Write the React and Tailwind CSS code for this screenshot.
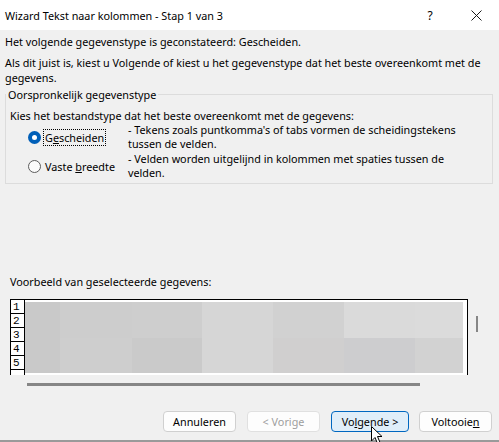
export default function App() {
  const widths = ['w-[35px]', 'w-[72px]', 'w-[70px]', 'w-[71px]', 'w-[71px]', 'w-[71px]', 'w-[48px]'];
  const topCls = ['bg-[#c9c9c9]', 'bg-[#cdcdcd]', 'bg-[#cecece]', 'bg-[#d6d6d6]', 'bg-[#d1d1d1]', 'bg-[#dadada]', 'bg-[#dbdbdb]'];
  const botCls = ['bg-[#c9c9c9]', 'bg-[#cecece]', 'bg-[#cacaca]', 'bg-[#d6d6d6]', 'bg-[#d0cfcf]', 'bg-[#cdcdcf]', 'bg-[#d2d2d2]'];

  return (
    <div className="relative w-[499px] h-[442px] overflow-hidden bg-[#f0f0f0] text-[10.8px] text-black font-['Noto_Sans',sans-serif] flex flex-col">
      {/* Title bar */}
      <div className="h-[30px] bg-white flex items-center pl-[5px] shrink-0">
        <span className="flex-1 leading-[15px]">Wizard Tekst naar kolommen - Stap 1 van 3</span>
        <span className="w-[46px] text-center text-[12px] leading-[15px]">?</span>
        <span className="w-[46px] flex justify-center items-center">
          <svg width="11" height="11" viewBox="0 0 11 11">
            <path d="M0.5 0.5 L10.5 10.5 M10.5 0.5 L0.5 10.5" stroke="#1a1a1a" strokeWidth="1" />
          </svg>
        </span>
      </div>

      <div className="px-[5px] flex flex-col">
        <p className="mt-[4px] leading-[15px] whitespace-nowrap">Het volgende gegevenstype is geconstateerd: Gescheiden.</p>
        <p className="mt-[6px] leading-[15px] whitespace-nowrap">
          Als dit juist is, kiest u Volgende of kiest u het gegevenstype dat het beste overeenkomt met de
          <br />
          gegevens.
        </p>

        {/* Group box */}
        <div className="relative mt-[9px] w-[488px] h-[90px] border border-[#dcdcdc] pt-[13px] pl-[4px]">
          <span className="absolute left-0 top-[-8px] px-[2px] bg-[#f0f0f0] leading-[15px]">Oorspronkelijk gegevenstype</span>
          <p className="leading-[15px] whitespace-nowrap">Kies het bestandstype dat het beste overeenkomt met de gegevens:</p>

          <div className="flex h-[28px]">
            <div className="w-[118px] shrink-0 flex items-center">
              <span className="ml-[18px] w-[13px] h-[13px] rounded-full bg-[#005fb8] flex items-center justify-center">
                <span className="w-[5px] h-[5px] rounded-full bg-white"></span>
              </span>
              <span className="ml-[2px] border border-dotted border-black px-[1px] h-[17px] leading-[15px]">
                G<span className="underline">e</span>scheiden
              </span>
            </div>
            <p className="leading-[14px] whitespace-nowrap">
              - Tekens zoals puntkomma's of tabs vormen de scheidingstekens
              <br />
              tussen de velden.
            </p>
          </div>

          <div className="flex h-[28px] mt-[1px]">
            <div className="w-[118px] shrink-0 flex items-center">
              <span className="ml-[18px] w-[13px] h-[13px] rounded-full bg-[#fbfbfb] border border-[#5c5c5c]"></span>
              <span className="ml-[2px] border border-transparent px-[1px] h-[17px] leading-[15px]">
                Vaste <span className="underline">b</span>reedte
              </span>
            </div>
            <p className="leading-[14px] whitespace-nowrap">
              - Velden worden uitgelijnd in kolommen met spaties tussen de
              <br />
              velden.
            </p>
          </div>
        </div>

        <p className="mt-[90px] ml-[5px] leading-[15px]">Voorbeeld van geselecteerde gegevens:</p>

        {/* Preview */}
        <div className="flex mt-[10px] ml-[5px]">
          <div className="w-[458px] h-[76px] border-l border-t border-r border-black bg-white flex">
            <div className="w-[14px] h-full border-r border-black flex flex-col font-['Liberation_Mono',monospace] text-[11px]">
              {[1, 2, 3, 4, 5].map((n) => (
                <div key={n} className="h-[14px] border-b border-black pl-[2px] leading-[14px]">{n}</div>
              ))}
            </div>
            <div className="pt-[2px] flex flex-col">
              <div className="flex h-[36px]">
                {widths.map((w, i) => (
                  <div key={i} className={`${w} h-full ${topCls[i]}`}></div>
                ))}
              </div>
              <div className="flex h-[35px]">
                {widths.map((w, i) => (
                  <div key={i} className={`${w} h-full ${botCls[i]}`}></div>
                ))}
              </div>
            </div>
          </div>
          <div className="ml-[8px]">
            <div className="mt-[17px] w-[2px] h-[16px] bg-[#868686]"></div>
          </div>
        </div>

        <div className="mt-[8px] ml-[22px] w-[393px] h-[3px] bg-[#868686]"></div>

        {/* Buttons */}
        <div className="mt-[25px] flex">
          <button className="ml-[158px] w-[73px] h-[21px] rounded-[4px] border border-[#d0d0d0] bg-[#fdfdfd] leading-[15px]">Annuleren</button>
          <button className="ml-[11px] w-[73px] h-[21px] rounded-[4px] border border-[#e0e0e0] bg-[#fdfdfd] text-[#9d9d9d] leading-[15px]">&lt; Vorige</button>
          <button className="ml-[11px] w-[78px] h-[21px] rounded-[4px] border border-[#0067c0] bg-[#e0eef9] leading-[15px]">
            Vo<span className="underline">l</span>gende &gt;
          </button>
          <button className="ml-[10px] w-[73px] h-[21px] rounded-[4px] border border-[#d0d0d0] bg-[#fdfdfd] leading-[15px]">
            Voltooie<span className="underline">n</span>
          </button>
        </div>
      </div>

      <div className="mt-auto h-[2px] bg-[#9a9a9a]"></div>

      {/* mouse cursor */}
      <svg className="absolute left-[371px] top-[426px]" width="14" height="20" viewBox="0 0 14 20">
        <path d="M0.5 0.5 L0.5 15 L4 11.5 L6.5 17.5 L9 16.5 L6.5 10.5 L11 10.5 Z" fill="white" stroke="black" strokeWidth="1" />
      </svg>
    </div>
  );
}
